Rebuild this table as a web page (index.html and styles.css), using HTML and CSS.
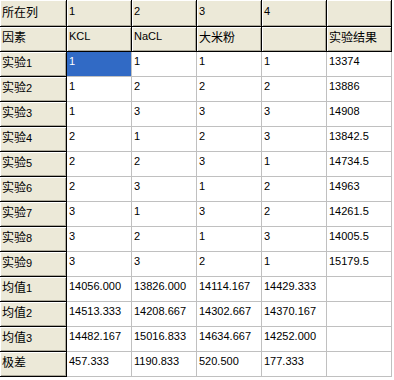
FILE: index.html
```html
<!DOCTYPE html>
<html>
<head>
<meta charset="utf-8">
<link rel="stylesheet" href="styles.css">
</head>
<body>
<div class="grid">
  <div class="c fx"><span class="zh">所在列</span></div>
  <div class="c fx">1</div>
  <div class="c fx">2</div>
  <div class="c fx">3</div>
  <div class="c fx">4</div>
  <div class="c fx"></div>

  <div class="c fx"><span class="zh">因素</span></div>
  <div class="c fx">KCL</div>
  <div class="c fx">NaCL</div>
  <div class="c fx"><span class="zh">大米粉</span></div>
  <div class="c fx"></div>
  <div class="c fx"><span class="zh">实验结果</span></div>

  <div class="c fx"><span class="zh">实验</span>1</div>
  <div class="c sel">1</div><div class="c">1</div><div class="c">1</div><div class="c">1</div><div class="c">13374</div>

  <div class="c fx"><span class="zh">实验</span>2</div>
  <div class="c">1</div><div class="c">2</div><div class="c">2</div><div class="c">2</div><div class="c">13886</div>

  <div class="c fx"><span class="zh">实验</span>3</div>
  <div class="c">1</div><div class="c">3</div><div class="c">3</div><div class="c">3</div><div class="c">14908</div>

  <div class="c fx"><span class="zh">实验</span>4</div>
  <div class="c">2</div><div class="c">1</div><div class="c">2</div><div class="c">3</div><div class="c">13842.5</div>

  <div class="c fx"><span class="zh">实验</span>5</div>
  <div class="c">2</div><div class="c">2</div><div class="c">3</div><div class="c">1</div><div class="c">14734.5</div>

  <div class="c fx"><span class="zh">实验</span>6</div>
  <div class="c">2</div><div class="c">3</div><div class="c">1</div><div class="c">2</div><div class="c">14963</div>

  <div class="c fx"><span class="zh">实验</span>7</div>
  <div class="c">3</div><div class="c">1</div><div class="c">3</div><div class="c">2</div><div class="c">14261.5</div>

  <div class="c fx"><span class="zh">实验</span>8</div>
  <div class="c">3</div><div class="c">2</div><div class="c">1</div><div class="c">3</div><div class="c">14005.5</div>

  <div class="c fx"><span class="zh">实验</span>9</div>
  <div class="c">3</div><div class="c">3</div><div class="c">2</div><div class="c">1</div><div class="c">15179.5</div>

  <div class="c fx"><span class="zh">均值</span>1</div>
  <div class="c">14056.000</div><div class="c">13826.000</div><div class="c">14114.167</div><div class="c">14429.333</div><div class="c"></div>

  <div class="c fx"><span class="zh">均值</span>2</div>
  <div class="c">14513.333</div><div class="c">14208.667</div><div class="c">14302.667</div><div class="c">14370.167</div><div class="c"></div>

  <div class="c fx"><span class="zh">均值</span>3</div>
  <div class="c">14482.167</div><div class="c">15016.833</div><div class="c">14634.667</div><div class="c">14252.000</div><div class="c"></div>

  <div class="c fx"><span class="zh">极差</span></div>
  <div class="c">457.333</div><div class="c">1190.833</div><div class="c">520.500</div><div class="c">177.333</div><div class="c"></div>
</div>
</body>
</html>
```

FILE: styles.css
```css
html, body {
  margin: 0;
  padding: 0;
  background: #ffffff;
}

.grid {
  display: grid;
  grid-template-columns: 67px repeat(5, 65px);
  grid-template-rows: 27px repeat(14, 25px);
  font-family: "Liberation Sans", "Noto Sans CJK SC", sans-serif;
  font-size: 11px;
  line-height: 13px;
  color: #000000;
}

.c {
  box-sizing: border-box;
  border-right: 1px solid #c0c0c0;
  border-bottom: 1px solid #c0c0c0;
  padding: 3px 0 0 2px;
  white-space: nowrap;
  overflow: hidden;
  background: #ffffff;
}

.c:nth-child(6n+1) {
  border-right-color: #000000;
}

.fx {
  background: #ece9d8;
  border-right-color: #000000;
  border-bottom-color: #000000;
  box-shadow: inset 1px 1px 0 #ffffff, inset -1px -1px 0 #aca899;
}

.grid > .c:first-child {
  padding-top: 5px;
}

.grid > .c:nth-child(-n+6) {
  padding-top: 5px;
}

.sel {
  background: #316ac5;
  color: #ffffff;
}

.zh {
  font-family: "Noto Sans CJK SC", sans-serif;
  font-size: 12px;
}
```
